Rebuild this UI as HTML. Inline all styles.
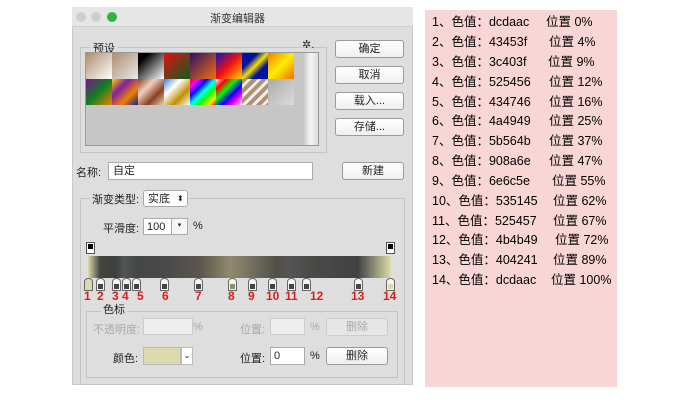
<!DOCTYPE html><html><head><meta charset="utf-8"><style>
*{margin:0;padding:0;box-sizing:border-box}
body{width:690px;height:414px;background:#fff;position:relative;overflow:hidden;font-family:"Liberation Sans","Noto Sans CJK SC",sans-serif;font-size:11px;color:#222}
.a{position:absolute}
.dlg{left:72px;top:7px;width:341px;height:378px;background:#dedede;border:1px solid #c8c8c8}
.btn{position:absolute;background:linear-gradient(#fff,#f0f0f0);border:1px solid #9a9a9a;border-radius:3px;text-align:center;font-size:11px;line-height:16px}
.inp{position:absolute;background:#fff;border:1px solid #aaa;line-height:14px}
.grp{position:absolute;border:1px solid #c4c4c4}
.sw{position:absolute;width:26px;height:26px}
.stop{position:absolute;width:9px;height:13px;background:#f4f4f4;border:1px solid #666;border-radius:4px 4px 0 0}
.stop i{position:absolute;left:1px;top:5px;width:5px;height:5px;background:#444}
.n{position:absolute;color:#d42020;font-weight:bold;font-size:12px;top:289px}
.pink{left:425px;top:10px;width:192px;height:377px;background:#f8d6d5}
.pink div{position:absolute;left:7px;font-size:12.5px;color:#000;white-space:nowrap;width:185px}
.pink b{position:absolute;font-weight:normal}
</style></head><body>
<div class="a dlg"></div>
<div class="a" style="left:72px;top:7px;width:341px;height:20px;background:#e6e6e6;border-bottom:1px solid #ccc"></div>
<div class="a" style="left:76px;top:12px;width:10px;height:10px;border-radius:5px;background:#cfcfcf"></div>
<div class="a" style="left:91px;top:12px;width:10px;height:10px;border-radius:5px;background:#cfcfcf"></div>
<div class="a" style="left:107px;top:12px;width:10px;height:10px;border-radius:5px;background:#2fb344"></div>
<div class="a" style="left:210px;top:10px;font-size:11px;color:#333">渐变编辑器</div>
<div class="grp" style="left:80px;top:47px;width:247px;height:106px"></div>
<div class="a" style="left:90px;top:40px;background:#dedede;padding:0 3px;font-size:11px">预设</div>
<div class="a" style="left:302px;top:38px;font-size:11px">✲.</div>
<div class="a" style="left:85px;top:52px;width:234px;height:94px;background:#c6c6c6;border:1px solid #999"></div>
<div class="a" style="left:303px;top:53px;width:15px;height:92px;background:linear-gradient(90deg,#c6c6c6,#f4f4f4,#ddd)"></div>
<div class="sw" style="left:86px;top:53px;background:linear-gradient(135deg,#b08c6c,#fff)"></div>
<div class="sw" style="left:112px;top:53px;background:linear-gradient(135deg,#b08c6c,#e8e8e8)"></div>
<div class="sw" style="left:138px;top:53px;background:linear-gradient(135deg,#000 20%,#fff)"></div>
<div class="sw" style="left:164px;top:53px;background:linear-gradient(135deg,#e01010,#0a6020)"></div>
<div class="sw" style="left:190px;top:53px;background:linear-gradient(135deg,#301060,#f07010)"></div>
<div class="sw" style="left:216px;top:53px;background:linear-gradient(135deg,#1010c0,#f01010,#ffd000)"></div>
<div class="sw" style="left:242px;top:53px;background:linear-gradient(135deg,#0010a0 30%,#f0e000,#0010a0 70%)"></div>
<div class="sw" style="left:268px;top:53px;background:linear-gradient(135deg,#f08000,#ffee00,#f07000)"></div>
<div class="sw" style="left:86px;top:79px;background:linear-gradient(135deg,#7a1090,#108020,#f08000)"></div>
<div class="sw" style="left:112px;top:79px;background:linear-gradient(135deg,#ffd000,#8020a0,#f08000,#102090)"></div>
<div class="sw" style="left:138px;top:79px;background:linear-gradient(135deg,#8a4020,#f0d0c0,#8a4020,#f0d0c0)"></div>
<div class="sw" style="left:164px;top:79px;background:linear-gradient(135deg,#3080e0,#fff,#c09000,#fff)"></div>
<div class="sw" style="left:190px;top:79px;background:linear-gradient(135deg,#f00,#f0f,#00f,#0ff,#0f0,#ff0,#f00)"></div>
<div class="sw" style="left:216px;top:79px;background:linear-gradient(135deg,#fff,#f00,#0f0,#00f,#f0f,#fff)"></div>
<div class="sw" style="left:242px;top:79px;background:repeating-linear-gradient(135deg,#b09070 0 4px,#eee 4px 7px)"></div>
<div class="sw" style="left:268px;top:79px;background:linear-gradient(135deg,#aaa,#ddd)"></div>
<div class="btn" style="left:335px;top:40px;width:69px;height:18px">确定</div>
<div class="btn" style="left:335px;top:66px;width:69px;height:18px">取消</div>
<div class="btn" style="left:335px;top:92px;width:69px;height:18px">载入...</div>
<div class="btn" style="left:335px;top:118px;width:69px;height:18px">存储...</div>
<div class="a" style="left:76px;top:164px">名称:</div>
<div class="inp" style="left:108px;top:162px;width:205px;height:18px;padding:1px 4px">自定</div>
<div class="btn" style="left:342px;top:162px;width:62px;height:18px">新建</div>
<div class="grp" style="left:80px;top:198px;width:325px;height:187px"></div>
<div class="a" style="left:90px;top:191px;background:#dedede;padding:0 2px">渐变类型:</div>
<div class="inp" style="left:143px;top:190px;width:45px;height:17px;border-radius:3px;padding:1px 4px;white-space:nowrap">实底<span style="position:absolute;left:33px;top:1px;font-size:8px">⬍</span></div>
<div class="a" style="left:103px;top:220px">平滑度:</div>
<div class="inp" style="left:143px;top:218px;width:45px;height:17px;padding:1px 3px">100</div>
<div class="a" style="left:171px;top:218px;width:17px;height:17px;border:1px solid #aaa;background:#f6f6f6;font-size:7px;text-align:center;line-height:14px">▾</div>
<div class="a" style="left:193px;top:220px">%</div>
<div class="a" style="left:86px;top:242px;width:9px;height:12px;border:1px solid #555;background:#fff"><i style="position:absolute;left:1px;top:1px;width:5px;height:5px;background:#000"></i></div>
<div class="a" style="left:386px;top:242px;width:9px;height:12px;border:1px solid #555;background:#fff"><i style="position:absolute;left:1px;top:1px;width:5px;height:5px;background:#000"></i></div>
<div class="a" style="left:88px;top:256px;width:303px;height:22px;background:linear-gradient(90deg,#dcdaac 0%,#43453f 4%,#3c403f 9%,#525456 12%,#434746 16%,#4a4949 25%,#5b564b 37%,#908a6e 47%,#6e6c5e 55%,#535145 62%,#525457 67%,#4b4b49 72%,#404241 89%,#dcdaac 100%)"></div>
<div class="stop" style="left:84px;top:278px;background:#dcdaac"></div>
<div class="stop" style="left:96px;top:278px"><i></i></div>
<div class="stop" style="left:112px;top:278px"><i></i></div>
<div class="stop" style="left:122px;top:278px"><i></i></div>
<div class="stop" style="left:132px;top:278px"><i></i></div>
<div class="stop" style="left:160px;top:278px"><i></i></div>
<div class="stop" style="left:194px;top:278px"><i></i></div>
<div class="stop" style="left:228px;top:278px"><i style="background:#908a6e"></i></div>
<div class="stop" style="left:248px;top:278px"><i></i></div>
<div class="stop" style="left:268px;top:278px"><i></i></div>
<div class="stop" style="left:287px;top:278px"><i></i></div>
<div class="stop" style="left:302px;top:278px"><i></i></div>
<div class="stop" style="left:354px;top:278px"><i></i></div>
<div class="stop" style="left:386px;top:278px"><i style="background:#dcdaac"></i></div>
<div class="n" style="left:84px">1</div><div class="n" style="left:97px">2</div><div class="n" style="left:112px">3</div><div class="n" style="left:122px">4</div><div class="n" style="left:137px">5</div><div class="n" style="left:162px">6</div><div class="n" style="left:195px">7</div><div class="n" style="left:228px">8</div><div class="n" style="left:248px">9</div><div class="n" style="left:266px">10</div><div class="n" style="left:285px">11</div><div class="n" style="left:310px">12</div><div class="n" style="left:351px">13</div><div class="n" style="left:383px">14</div>
<div class="grp" style="left:86px;top:311px;width:312px;height:67px"></div>
<div class="a" style="left:101px;top:301px;background:#dedede;padding:0 2px">色标</div>
<div class="a" style="left:93px;top:321px;color:#aaa">不透明度:</div>
<div class="inp" style="left:143px;top:318px;width:50px;height:17px;background:#eee;border-color:#ccc"></div>
<div class="a" style="left:193px;top:321px;color:#aaa">%</div>
<div class="a" style="left:240px;top:321px;color:#aaa">位置:</div>
<div class="inp" style="left:270px;top:318px;width:35px;height:17px;background:#eee;border-color:#ccc"></div>
<div class="a" style="left:310px;top:321px;color:#aaa">%</div>
<div class="btn" style="left:326px;top:318px;width:62px;height:18px;color:#aaa;border-color:#ccc;background:#e6e6e6">删除</div>
<div class="a" style="left:113px;top:350px">颜色:</div>
<div class="a" style="left:143px;top:347px;width:38px;height:18px;background:#dcdaac;border:1px solid #bbb"></div>
<div class="a" style="left:181px;top:347px;width:12px;height:18px;background:#fff;border:1px solid #bbb;font-size:8px;text-align:center;line-height:15px">⌄</div>
<div class="a" style="left:240px;top:350px">位置:</div>
<div class="inp" style="left:270px;top:347px;width:35px;height:18px;padding:1px 3px">0</div>
<div class="a" style="left:310px;top:350px">%</div>
<div class="btn" style="left:326px;top:347px;width:62px;height:18px">删除</div>
<div class="a pink">
<div style="top:1px">1、色值：dcdaac<b style="left:114px">位置 0%</b></div>
<div style="top:21px">2、色值：43453f<b style="left:117px">位置 4%</b></div>
<div style="top:41px">3、色值：3c403f<b style="left:116px">位置 9%</b></div>
<div style="top:61px">4、色值：525456<b style="left:117px">位置 12%</b></div>
<div style="top:81px">5、色值：434746<b style="left:117px">位置 16%</b></div>
<div style="top:100px">6、色值：4a4949<b style="left:117px">位置 25%</b></div>
<div style="top:120px">7、色值：5b564b<b style="left:117px">位置 37%</b></div>
<div style="top:140px">8、色值：908a6e<b style="left:117px">位置 47%</b></div>
<div style="top:160px">9、色值：6e6c5e<b style="left:120px">位置 55%</b></div>
<div style="top:180px">10、色值：535145<b style="left:121px">位置 62%</b></div>
<div style="top:200px">11、色值：525457<b style="left:121px">位置 67%</b></div>
<div style="top:219px">12、色值：4b4b49<b style="left:123px">位置 72%</b></div>
<div style="top:239px">13、色值：404241<b style="left:121px">位置 89%</b></div>
<div style="top:259px">14、色值：dcdaac<b style="left:119px">位置 100%</b></div>
</div>
</body></html>
